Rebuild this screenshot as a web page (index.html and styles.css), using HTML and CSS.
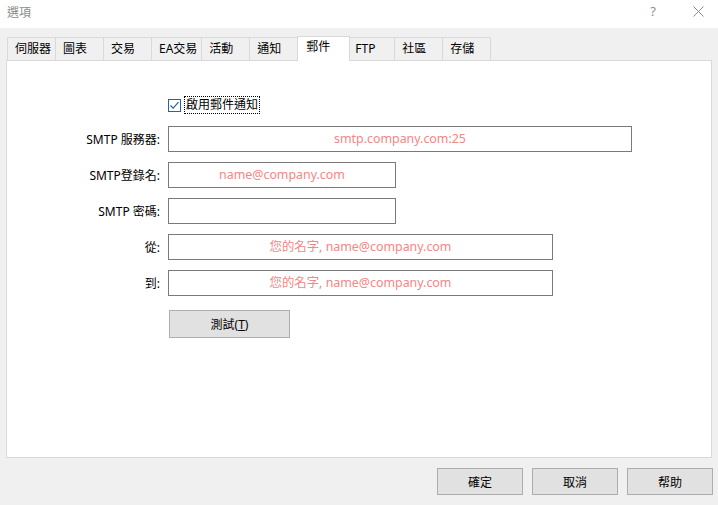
FILE: index.html
```html
<!DOCTYPE html>
<html lang="zh-Hant">
<head>
    <meta charset="UTF-8">
    <title>選項</title>
    <link rel="stylesheet" href="styles.css">
</head>
<body>
    <div class="titlebar">
        <span class="title">選項</span>
        <span class="helpMark">?</span>
        <svg class="closeIcon" width="11" height="11" viewBox="0 0 11 11">
            <path d="M0.5 0.5 L10.5 10.5 M10.5 0.5 L0.5 10.5" stroke="#8a8a8a" stroke-width="1" fill="none"/>
        </svg>
    </div>

    <div class="dialog">
        <!-- Onglets -->
        <div class="tabs">
            <div class="tab">伺服器</div>
            <div class="tab">圖表</div>
            <div class="tab">交易</div>
            <div class="tab">EA交易</div>
            <div class="tab">活動</div>
            <div class="tab">通知</div>
            <div class="tab active">郵件</div>
            <div class="tab narrow">FTP</div>
            <div class="tab">社區</div>
            <div class="tab">存儲</div>
        </div>

        <div class="panel">
            <div class="form">
                <div class="row">
                    <div class="label"></div>
                    <label class="check">
                        <svg class="checkBox" width="13" height="13" viewBox="0 0 13 13">
                            <rect x="0.5" y="0.5" width="12" height="12" fill="#fff" stroke="#1f64ad"/>
                            <path d="M2.5 6.5 L5.2 9.2 L10.5 3.2" stroke="#1f64ad" stroke-width="1.2" fill="none"/>
                        </svg>
                        <span class="focusText">啟用郵件通知</span>
                    </label>
                </div>
                <div class="row">
                    <div class="label">SMTP 服務器:</div>
                    <input class="field wide" type="text" placeholder="smtp.company.com:25">
                </div>
                <div class="row">
                    <div class="label">SMTP登錄名:</div>
                    <input class="field short" type="text" placeholder="name@company.com">
                </div>
                <div class="row">
                    <div class="label">SMTP 密碼:</div>
                    <input class="field short" type="password">
                </div>
                <div class="row">
                    <div class="label">從:</div>
                    <input class="field medium" type="text" placeholder="您的名字, name@company.com">
                </div>
                <div class="row">
                    <div class="label">到:</div>
                    <input class="field medium" type="text" placeholder="您的名字, name@company.com">
                </div>
                <div class="row buttonRow">
                    <div class="label"></div>
                    <button class="button testButton">測試(<u>T</u>)</button>
                </div>
            </div>
        </div>

        <div class="actions">
            <button class="button">確定</button>
            <button class="button">取消</button>
            <button class="button">帮助</button>
        </div>
    </div>
</body>
</html>
```

FILE: styles.css
```css
body {
    margin: 0;
    width: 718px;
    height: 505px;
    overflow: hidden;
    background-color: #f0f0f0;
    font-family: "Noto Sans", "Noto Sans CJK TC", sans-serif;
    font-size: 12px;
    color: #000;
}
.titlebar {
    height: 28px;
    background-color: #fff;
    display: flex;
    align-items: center;
    padding: 0 0 0 7px;
}
.title {
    color: #8c8c8c;
    flex: 1;
    margin-top: -5px;
}
.helpMark {
    color: #8c8c8c;
    font-size: 13px;
    margin-right: 37px;
    margin-top: -6px;
}
.closeIcon {
    margin-right: 14px;
    margin-top: -6px;
}
.dialog {
    padding: 8px 5px 0 6px;
}
.tabs {
    display: flex;
    align-items: flex-end;
    height: 24px;
    margin-left: 1px;
}
.tab {
    box-sizing: border-box;
    height: 23px;
    min-width: 49px;
    padding: 0 4px 0 7px;
    border: 1px solid #d9d9d9;
    border-bottom: none;
    margin-left: -1px;
    line-height: 22px;
    background-color: #f0f0f0;
}
.tab:first-child {
    margin-left: 0;
}
.tab.narrow {
    min-width: 46px;
    padding-left: 5px;
}
.tab.active {
    height: 25px;
    min-width: 53px;
    background-color: #fff;
    margin-bottom: -1px;
    position: relative;
    z-index: 1;
    line-height: 20px;
    padding-left: 8px;
}
.panel {
    box-sizing: border-box;
    width: 706px;
    height: 398px;
    background-color: #fff;
    border: 1px solid #d9d9d9;
}
.form {
    display: flex;
    flex-direction: column;
    gap: 10px;
    padding-top: 29px;
}
.row {
    display: flex;
    align-items: center;
    height: 26px;
}
.label {
    width: 153px;
    text-align: right;
    margin-right: 8px;
    flex-shrink: 0;
}
.check {
    display: flex;
    align-items: center;
    gap: 3px;
    margin-top: 4px;
}
.checkBox {
    margin-top: 1px;
}
.focusText {
    border: 1px dotted #000;
    padding: 0 1px;
    line-height: 16px;
}
.field {
    box-sizing: border-box;
    height: 26px;
    border: 1px solid #7a7a7a;
    background-color: #fff;
    font-family: inherit;
    font-size: 12.4px;
    text-align: center;
    outline: none;
    padding: 0 4px 1px;
}
.field::placeholder {
    color: #f48686;
}
.wide {
    width: 464px;
}
.short {
    width: 228px;
}
.medium {
    width: 385px;
}
.buttonRow {
    height: 28px;
    margin-top: 4px;
}
.button {
    box-sizing: border-box;
    width: 86px;
    height: 27px;
    background-color: #e1e1e1;
    border: 1px solid #adadad;
    font-family: inherit;
    font-size: 12px;
    color: #000;
    padding: 0;
}
.testButton {
    width: 121px;
    height: 28px;
    margin-left: 1px;
}
.actions {
    display: flex;
    justify-content: flex-end;
    gap: 9px;
    margin-top: 10px;
}
```
